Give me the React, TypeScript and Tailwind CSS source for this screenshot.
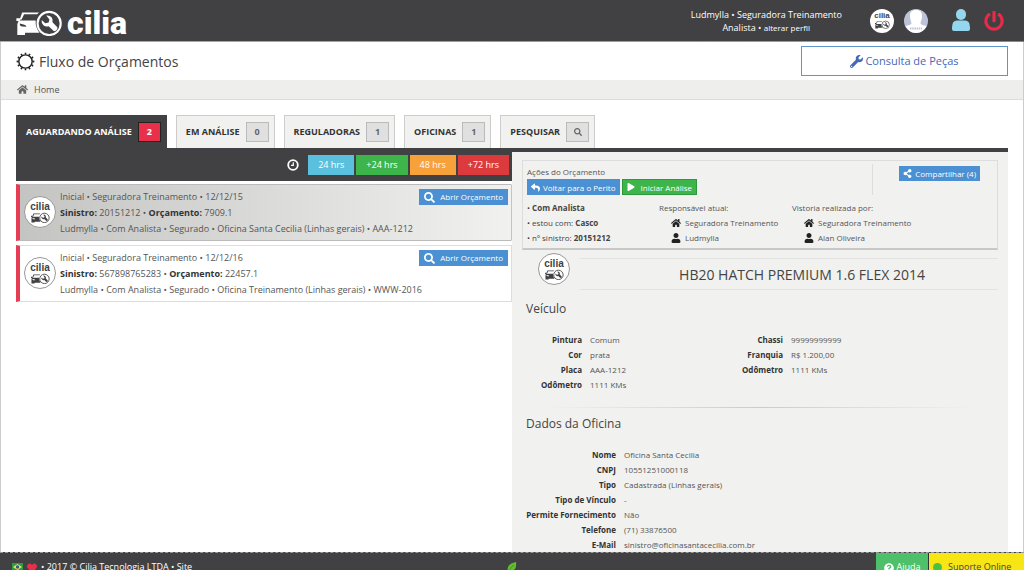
import React, { useState } from "react";
import {
  FaHeart,
  FaHome,
  FaLeaf,
  FaPlay,
  FaPowerOff,
  FaQuestionCircle,
  FaReply,
  FaSearch,
  FaShareAlt,
  FaUser,
  FaWrench,
} from "react-icons/fa";

type Tab = {
  id: string;
  label: string;
  count?: number;
};

type Quote = {
  id: string;
  info: string;
  claim: string;
  quote: string;
  people: string;
};

type Field = [string, string];

const tabs: Tab[] = [
  { id: "aguardando", label: "AGUARDANDO ANÁLISE", count: 2 },
  { id: "analise", label: "EM ANÁLISE", count: 0 },
  { id: "reguladoras", label: "REGULADORAS", count: 1 },
  { id: "oficinas", label: "OFICINAS", count: 1 },
  { id: "pesquisar", label: "PESQUISAR" },
];

const hours = [
  { label: "24 hrs", color: "bg-[#5bc0de]" },
  { label: "+24 hrs", color: "bg-[#3db54a]" },
  { label: "48 hrs", color: "bg-[#f7a13b]" },
  { label: "+72 hrs", color: "bg-[#dc3a3c]" },
];

const quotes: Quote[] = [
  {
    id: "q1",
    info: "Inicial • Seguradora Treinamento • 12/12/15",
    claim: "20151212",
    quote: "7909.1",
    people:
      "Ludmylla • Com Analista • Segurado • Oficina Santa Cecilia (Linhas gerais) • AAA-1212",
  },
  {
    id: "q2",
    info: "Inicial • Seguradora Treinamento • 12/12/16",
    claim: "567898765283",
    quote: "22457.1",
    people:
      "Ludmylla • Com Analista • Segurado • Oficina Treinamento (Linhas gerais) • WWW-2016",
  },
];

const vehicleLeft: Field[] = [
  ["Pintura", "Comum"],
  ["Cor", "prata"],
  ["Placa", "AAA-1212"],
  ["Odômetro", "1111 KMs"],
];

const vehicleRight: Field[] = [
  ["Chassi", "99999999999"],
  ["Franquia", "R$ 1.200,00"],
  ["Odômetro", "1111 KMs"],
];

const workshop: Field[] = [
  ["Nome", "Oficina Santa Cecilia"],
  ["CNPJ", "10551251000118"],
  ["Tipo", "Cadastrada (Linhas gerais)"],
  ["Tipo de Vínculo", "-"],
  ["Permite Fornecimento", "Não"],
  ["Telefone", "(71) 33876500"],
  ["E-Mail", "sinistro@oficinasantacecilia.com.br"],
];

const CarMark = ({ className }: { className: string }) => (
  <svg viewBox="0 0 48 28" className={className} aria-hidden="true">
    <path d="M6 3.500H23.500L21.500 5.500H8L5.500 11H3.500z" fill="currentColor" />
    <path d="M0 9.500h4.500l-1 3H0z" fill="currentColor" />
    <path
      fillRule="evenodd"
      d="M2.500 12h17.500q-.5 7 4 12.500H9V27H1V15.500zM3.500 15q0 3 2.500 3.200l4.500.3q-.5-2-3-2.500z"
      fill="currentColor"
    />
    <circle cx="34" cy="15" r="12" fill="none" stroke="currentColor" strokeWidth="2.200" />
    <path
      d="M31 6.800a5.500 5.500 0 0 1 6.500 7l5 5q.8 3.200-3.500 4.200l-5.500-5.200a5.500 5.500 0 0 1-7.200-6.300l3.700 3.300 3.500-.8.800-3.200z"
      fill="currentColor"
    />
  </svg>
);

const Badge = ({ className, small = false }: { className: string; small?: boolean }) => (
  <span
    className={`flex shrink-0 flex-col items-center justify-center rounded-full bg-white text-[#414143] ${className}`}
  >
    <span
      className={`font-['Liberation_Sans',sans-serif] font-bold ${
        small ? "text-[8px] leading-[8px]" : "text-[10px] leading-[10px]"
      }`}
    >
      cilia
    </span>
    <CarMark className={small ? "h-[9px] w-[15px]" : "h-[11px] w-[19px]"} />
  </span>
);

const FieldList = ({ fields, labelWidth }: { fields: Field[]; labelWidth: string }) => (
  <dl className="text-[8px] leading-[15px]">
    {fields.map(([label, value]) => (
      <div key={label} className="flex gap-2">
        <dt className={`${labelWidth} shrink-0 text-right font-bold text-[#333]`}>{label}</dt>
        <dd>{value}</dd>
      </div>
    ))}
  </dl>
);

const Owner = ({ title, company, person }: { title: string; company: string; person: string }) => (
  <div className="w-[133px]">
    <p>{title}</p>
    <p className="flex items-center gap-1 pl-3">
      <FaHome className="size-[10px] text-[#222]" />
      {company}
    </p>
    <p className="flex items-center gap-1 pl-3">
      <FaUser className="size-[10px] text-[#222]" />
      {person}
    </p>
  </div>
);

const Header = () => (
  <header className="shrink-0 bg-[#414143] text-white">
    <div className="flex h-[41px] items-center justify-between pr-5 pl-4">
      <a href="#" className="flex items-center gap-1 pt-1" aria-label="cilia">
        <CarMark className="h-[27px] w-[47px]" />
        <span className="font-[Roboto,sans-serif] text-[32px] leading-9 font-black">cilia</span>
      </a>
      <div className="flex items-center">
        <div className="mr-7 text-right text-[9px] leading-[13px]">
          <p>Ludmylla • Seguradora Treinamento</p>
          <p className="mr-8">
            Analista •{" "}
            <a href="#" className="text-[8px]">
              alterar perfil
            </a>
          </p>
        </div>
        <Badge small className="mr-[10px] size-6" />
        <svg viewBox="0 0 24 24" className="mr-6 size-6" aria-hidden="true">
          <circle cx="12" cy="12" r="12" fill="#bcc3d8" />
          <path
            d="M12 1c4.500 0 6.500 2.500 6 7-.3 2.500-1 4-1.500 6 .3 2 3.500 2.500 6 3-2 4-5.500 7-10.500 7S4 21 1.500 17c2.500-.5 5.700-1 6-3-.5-2-1.200-3.500-1.500-6C5.500 3.500 7.500 1 12 1z"
            fill="#fff"
          />
          <path d="M6 19.500h12" stroke="#bcc3d8" strokeWidth="2" strokeDasharray="1.500 .7" />
        </svg>
        <button type="button" aria-label="Usuário">
          <svg viewBox="0 0 18 23" className="mr-[14px] h-[23px] w-[18px]" aria-hidden="true">
            <rect x="4" y="0" width="10" height="11" rx="5" fill="#93d6ee" />
            <path d="M5 11.500h8q5 0 5 7V20q0 2-2 2H2q-2 0-2-2v-1.500q0-7 5-7z" fill="#93d6ee" />
          </svg>
        </button>
        <button type="button" aria-label="Sair">
          <FaPowerOff className="size-5 text-[#e92a4b]" />
        </button>
      </div>
    </div>
    <div className="h-px bg-linear-to-r from-[#a5c34a] via-[#e8862e] to-[#3f9fd0]" />
  </header>
);

const App = () => {
  const [active, setActive] = useState("aguardando");

  return (
    <div className="flex h-screen flex-col overflow-hidden bg-white font-['Open_Sans',sans-serif] text-[#555]">
      <Header />

      <main className="min-h-0 flex-1 overflow-hidden border-x border-[#ccc]">
        <div className="flex h-[38px] items-center justify-between px-[15px]">
          <h1 className="flex items-center gap-1 text-[14px] text-[#444]">
            <svg viewBox="0 0 20 20" className="size-[19px]" aria-hidden="true">
              <circle cx="10" cy="10" r="7" fill="none" stroke="#222" strokeWidth="1.500" />
              <circle
                cx="10"
                cy="10"
                r="8.300"
                fill="none"
                stroke="#222"
                strokeWidth="2"
                pathLength="120"
                strokeDasharray="4 6"
                strokeDashoffset="2"
              />
            </svg>
            Fluxo de Orçamentos
          </h1>
          <a
            href="#"
            className="flex h-[30px] w-[207px] items-center justify-center gap-[2px] border border-[#5e96cb] text-[11px] text-[#4468b8]"
          >
            <FaWrench className="size-[13px]" />
            Consulta de Peças
          </a>
        </div>

        <nav className="flex h-5 items-center gap-[6px] border-b border-[#dcdcdc] bg-[#eeeeed] px-4 text-[9px]">
          <FaHome className="size-[11px] text-[#666]" />
          <a href="#">Home</a>
        </nav>

        <div className="px-[15px] pt-[15px]">
          <div className="flex gap-[9px]">
            {tabs.map((tab) => (
              <button
                key={tab.id}
                type="button"
                onClick={() => setActive(tab.id)}
                className={`flex h-[33px] items-center gap-[6px] border border-b-0 pr-[5px] pl-[9px] text-[9px] font-bold ${
                  active === tab.id
                    ? "border-[#414143] bg-[#414143] text-white"
                    : "border-[#ccc] bg-[#f1f1ef] text-[#333]"
                }`}
              >
                {tab.label}
                <span
                  className={`flex h-5 w-[23px] items-center justify-center border ${
                    active === tab.id
                      ? "border-[#222] bg-[#e9304a]"
                      : "border-[#bbb] bg-[#e0e0e0] text-[#666]"
                  }`}
                >
                  {tab.count ?? <FaSearch className="size-2" />}
                </span>
              </button>
            ))}
          </div>

          <div className="flex border-t-4 border-[#414143]">
            <section className="w-1/2">
              <div className="flex h-[29px] items-start justify-end gap-[2px] bg-[#414143] pt-[3px] pr-[3px] text-[9px] text-white">
                <svg viewBox="0 0 12 12" className="mt-1 mr-[7px] size-3" aria-hidden="true">
                  <circle cx="6" cy="6" r="4.800" fill="none" stroke="#fff" strokeWidth="1.800" />
                  <path d="M6.300 3.200v3.100H4" fill="none" stroke="#fff" strokeWidth="1.200" />
                </svg>
                {hours.map((hour) => (
                  <button key={hour.label} type="button" className={`h-5 px-[10px] ${hour.color}`}>
                    {hour.label}
                  </button>
                ))}
              </div>

              <ul className="mt-[3px] flex flex-col gap-1">
                {quotes.map((item, index) => (
                  <li
                    key={item.id}
                    className={`flex h-[57px] items-start gap-1 border border-l-4 border-l-[#e63d55] pt-1 pl-1 ${
                      index === 0
                        ? "border-y-[#bbb] border-r-transparent bg-linear-to-r from-[#c4c4c3] to-[#f1f1ef]"
                        : "border-[#ddd]"
                    }`}
                  >
                    <Badge className="mt-[7px] size-8 border border-[#999]" />
                    <div className="relative flex-1 text-[9px] leading-4">
                      <p>{item.info}</p>
                      <p>
                        <b className="text-[#333]">Sinistro:</b> {item.claim} •{" "}
                        <b className="text-[#333]">Orçamento:</b> {item.quote}
                      </p>
                      <p>{item.people}</p>
                      <button
                        type="button"
                        className="absolute top-0 right-[3px] flex h-4 items-center gap-[5px] bg-[#4a90d2] px-[5px] text-[8px] text-white"
                      >
                        <FaSearch className="size-[11px]" />
                        Abrir Orçamento
                      </button>
                    </div>
                  </li>
                ))}
              </ul>
            </section>

            <section className="w-1/2 bg-[#f1f1ef] pt-2 pr-[10px] pb-3 pl-[10px]">
              <div className="border border-b-2 border-[#ddd] border-b-[#c8c8c8] px-1 pt-[3px] pb-[3px] text-[8px] leading-[15px]">
                <div className="flex h-9 justify-between">
                  <div>
                    <p>Ações do Orçamento</p>
                    <div className="flex gap-[2px] text-white">
                      <button
                        type="button"
                        className="flex h-4 items-center gap-[3px] bg-[#4a90d2] px-1"
                      >
                        <FaReply className="size-[9px]" />
                        Voltar para o Perito
                      </button>
                      <button
                        type="button"
                        className="flex h-4 items-center gap-[6px] border border-[#2f9a3c] bg-[#3db54a] px-1"
                      >
                        <FaPlay className="size-2" />
                        Iniciar Análise
                      </button>
                    </div>
                  </div>
                  <div className="h-[31px] border-l border-[#ddd] pr-[13px] pl-[26px]">
                    <button
                      type="button"
                      className="mt-[2px] flex h-[15px] items-center gap-[3px] bg-[#4a90d2] px-1 text-white"
                    >
                      <FaShareAlt className="size-[9px]" />
                      Compartilhar (4)
                    </button>
                  </div>
                </div>
                <div className="flex">
                  <ul className="w-[132px] text-[#444]">
                    <li>
                      • <b>Com Analista</b>
                    </li>
                    <li>
                      • estou com: <b>Casco</b>
                    </li>
                    <li>
                      • nº sinistro: <b>20151212</b>
                    </li>
                  </ul>
                  <Owner
                    title="Responsável atual:"
                    company="Seguradora Treinamento"
                    person="Ludmylla"
                  />
                  <Owner
                    title="Vistoria realizada por:"
                    company="Seguradora Treinamento"
                    person="Alan Oliveira"
                  />
                </div>
              </div>

              <div className="flex h-10 gap-[10px] pl-4">
                <Badge className="mt-[3px] size-8 border border-[#999]" />
                <h2 className="mt-2 flex h-8 flex-1 items-center justify-center border-y border-[#e2e2e0] pl-[26px] text-[14px] text-[#444]">
                  HB20 HATCH PREMIUM 1.6 FLEX 2014
                </h2>
              </div>

              <h3 className="mt-[10px] ml-1 text-[12px] leading-[18px] text-[#444]">Veículo</h3>
              <div className="mt-[14px] flex">
                <div className="w-[201px]">
                  <FieldList fields={vehicleLeft} labelWidth="w-[60px]" />
                </div>
                <FieldList fields={vehicleRight} labelWidth="w-[60px]" />
              </div>

              <div className="mx-6 mt-[15px] h-px bg-linear-to-r from-transparent via-[#ccc] to-transparent" />
              <h3 className="mt-[7px] ml-1 text-[12px] leading-[18px] text-[#444]">
                Dados da Oficina
              </h3>
              <div className="mt-[14px]">
                <FieldList fields={workshop} labelWidth="w-[94px]" />
              </div>
            </section>
          </div>
        </div>
      </main>

      <footer className="flex h-[18px] shrink-0 justify-between overflow-hidden border-t border-dashed border-[#999] bg-[#414143] text-[9px] leading-[28px] text-white">
        <p className="flex flex-1 items-start gap-1 pl-3">
          <svg viewBox="0 0 11 8" className="mt-[10px] h-2 w-[11px]" aria-hidden="true">
            <rect width="11" height="8" fill="#2c9b46" />
            <path d="M5.500 1L10 4 5.500 7 1 4z" fill="#f5e04a" />
            <circle cx="5.500" cy="4" r="1.700" fill="#34549c" />
          </svg>
          <FaHeart className="mt-[10px] size-[10px] text-[#e9304a]" />
          • 2017 © Cilia Tecnologia LTDA • Site
        </p>
        <svg viewBox="0 0 10 10" className="mt-[9px] mr-3 size-[10px]" aria-hidden="true">
          <path d="M9 0q1 7-3 8.500-2 .7-3.500 0L1.500 10H.500q0-4 1-6Q3.500 1 9 0z" fill="#5fc02e" />
          <path d="M2 8.500Q4 5 7 3" fill="none" stroke="#3a8a1c" strokeWidth=".8" />
        </svg>
        <div className="flex flex-1 justify-end">
          <a href="#" className="flex w-[52px] justify-center gap-[3px] bg-[#4fc06a]">
            <FaQuestionCircle className="mt-[10px] size-[10px]" />
            Ajuda
          </a>
          <a
            href="#"
            className="flex w-[96px] items-start gap-[6px] border-l border-[#333] bg-[#f7e614] pl-1 text-[#444]"
          >
            <span className="mt-[10px] size-[9px] rounded-full bg-[#4cc040]" />
            Suporte Online
          </a>
        </div>
      </footer>
    </div>
  );
};

export default App;
